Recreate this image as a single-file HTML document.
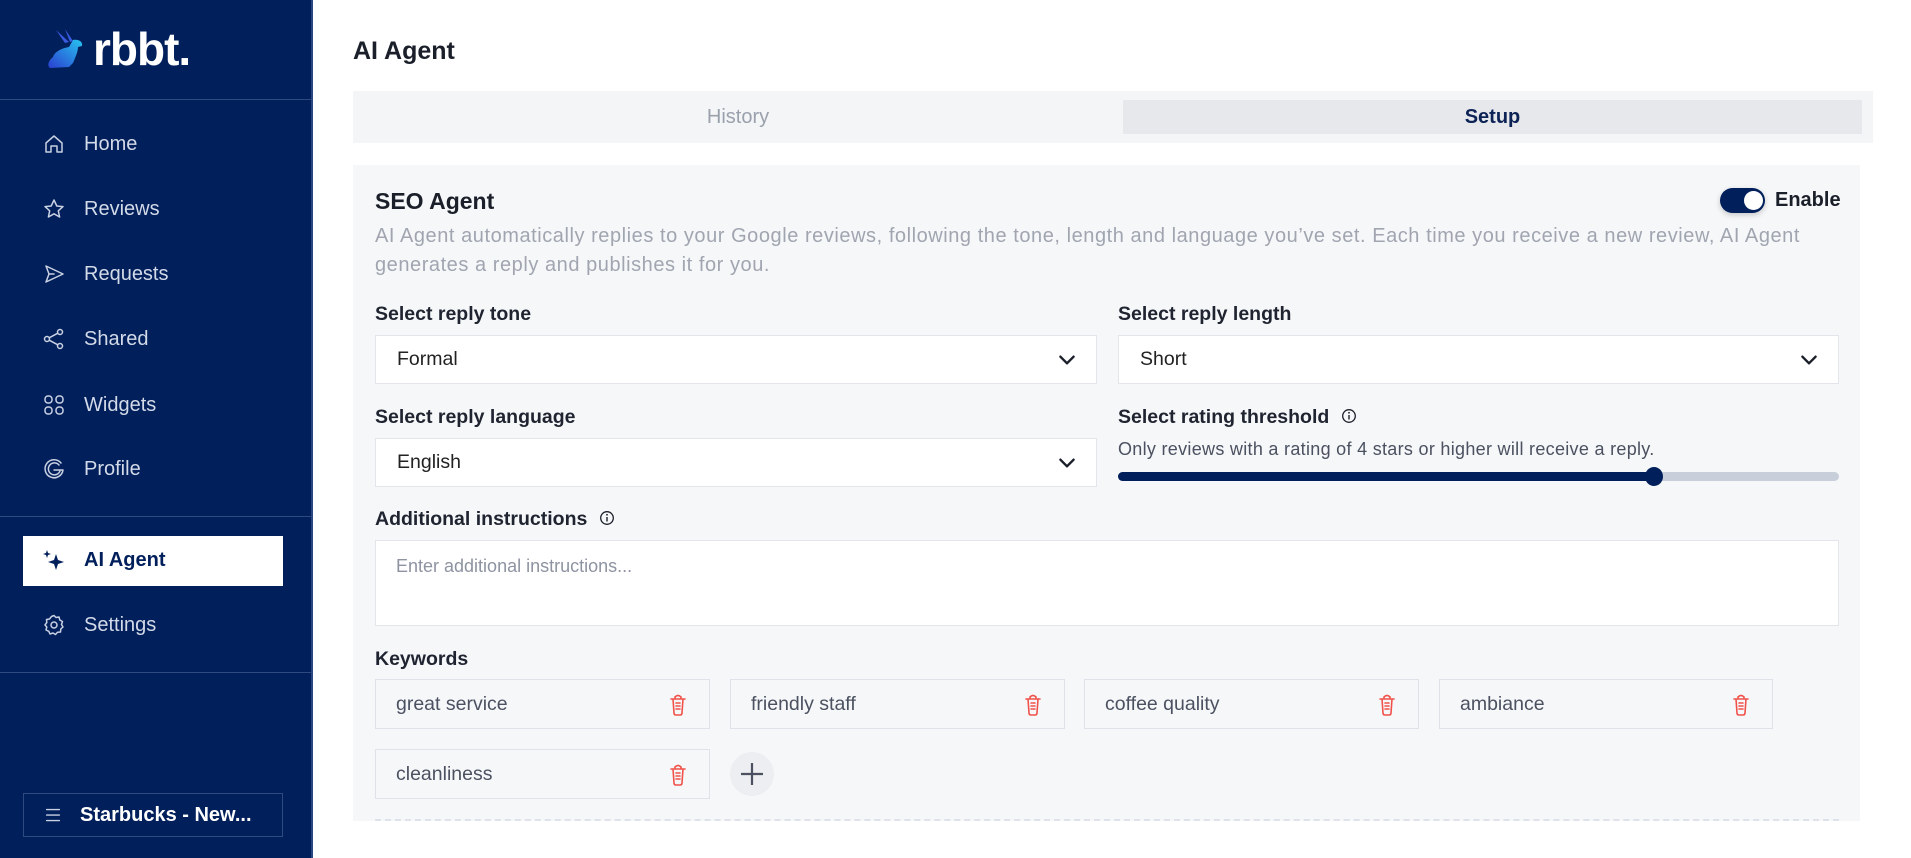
<!DOCTYPE html>
<html><head><meta charset="utf-8"><style>
*{box-sizing:border-box;margin:0;padding:0}
body{width:1911px;height:858px;overflow:hidden;background:#fff;font-family:"Liberation Sans",sans-serif;position:relative}
.sb{position:absolute;left:0;top:0;width:313px;height:858px;background:#011f5b;border-right:2px solid #2a4680}
.hr{position:absolute;left:0;width:311px;height:1px;background:#2f4a80}
.nav{position:absolute;left:42px;display:flex;align-items:center;color:#d3dae8;font-size:20px}
.nav svg{width:24px;height:24px;margin-right:18px;fill:none;stroke:#c9d1e2;stroke-width:1.5;stroke-linecap:round;stroke-linejoin:round}
.abs{position:absolute}
.lbl{position:absolute;font-size:19.5px;font-weight:bold;color:#1f2430}
.sel{position:absolute;height:49px;background:#fff;border:1px solid #e3e5ea;font-size:19.5px;color:#222;padding-left:21px;line-height:47px}
.sel svg{position:absolute;right:18px;top:13px}
.kw{position:absolute;height:50px;background:#f6f7f9;border:1px solid #dfe2e8;font-size:19.5px;color:#4b5160;padding-left:20px;line-height:48px}
.kw svg{position:absolute;right:21px;top:13px}
</style></head><body>
<div class="sb">
 <svg class="abs" style="left:45px;top:28px" width="50" height="44" viewBox="0 0 50 44">
  <defs><linearGradient id="g" x1="0" y1="1" x2="1" y2="0"><stop offset="0" stop-color="#2a3fd0"/><stop offset="1" stop-color="#27c3f0"/></linearGradient></defs>
  <path d="M11 2 L24 14 L20 15Z M20 1 L28 13 L25 14Z" fill="#3a5ae0"/>
  <path d="M28 12 C34 11 38 14 37 18 L33 19 C33 24 30 30 28 35 L24 39 L5 40 C2 38 3 33 8 29 C10 23 18 20 24 19 Z" fill="url(#g)"/>
 </svg>
 <div class="abs" style="left:93px;top:22px;color:#fff;font-size:46px;font-weight:bold;letter-spacing:-1px">rbbt.</div>
 <div class="hr" style="top:99px"></div>
 <div class="nav" style="top:132px"><svg viewBox="0 0 24 24"><path d="M4 11 L12 4 L20 11 V20 H15 V14 H9 V20 H4Z"/></svg>Home</div>
 <div class="nav" style="top:197px"><svg viewBox="0 0 24 24"><path d="M12 3 L14.8 9 L21 9.6 L16.3 13.8 L17.6 20 L12 16.8 L6.4 20 L7.7 13.8 L3 9.6 L9.2 9Z"/></svg>Reviews</div>
 <div class="nav" style="top:262px"><svg viewBox="0 0 24 24"><path d="M4 4 L21 12 L4 20 L7 12Z M7 12 H12"/></svg>Requests</div>
 <div class="nav" style="top:327px"><svg viewBox="0 0 24 24"><circle cx="18" cy="5" r="2.5"/><circle cx="18" cy="19" r="2.5"/><circle cx="5" cy="12" r="2.5"/><path d="M7.2 10.8 L15.8 6.2 M7.2 13.2 L15.8 17.8"/></svg>Shared</div>
 <div class="nav" style="top:393px"><svg viewBox="0 0 24 24"><rect x="3" y="3" width="7" height="7" rx="3"/><rect x="14" y="3" width="7" height="7" rx="3"/><rect x="3" y="14" width="7" height="7" rx="3"/><rect x="14" y="14" width="7" height="7" rx="3"/></svg>Widgets</div>
 <div class="nav" style="top:457px"><svg viewBox="0 0 24 24"><path d="M19 6 A9 9 0 1 0 21 13 H12 M17 8 A6 6 0 1 0 18 14"/></svg>Profile</div>
 <div class="hr" style="top:516px"></div>
 <div class="abs" style="left:23px;top:536px;width:260px;height:50px;background:#fff"></div>
 <div class="nav" style="top:548px;color:#011f5b;font-weight:bold"><svg viewBox="0 0 24 24" style="fill:#011f5b;stroke:none"><path d="M14 6 L16 12 L22 14 L16 16 L14 22 L12 16 L6 14 L12 12Z M5 2 L6 5 L9 6 L6 7 L5 10 L4 7 L1 6 L4 5Z"/></svg>AI Agent</div>
 <div class="nav" style="top:613px"><svg viewBox="0 0 24 24"><circle cx="12" cy="12" r="3"/><path d="M12 2.5 L14 4.5 L17 4 L17.8 7 L20.5 8.5 L19.5 11.5 L21 14 L18.8 16 L18.5 19 L15.5 19.3 L13.5 21.5 L11 20 L8 21 L6.8 18.3 L4 17 L4.8 14 L3 12 L4.8 9.5 L4.5 6.5 L7.5 6 L9.5 3.5Z"/></svg>Settings</div>
 <div class="hr" style="top:672px"></div>
 <div class="abs" style="left:23px;top:793px;width:260px;height:44px;border:1px solid #2f4a80"></div>
 <div class="nav" style="top:803px;left:42px;color:#fff;font-weight:bold"><svg viewBox="0 0 24 24" style="width:22px;margin-right:16px"><path d="M5 6H19M5 12H19M5 18H19"/></svg>Starbucks - New...</div>
</div>

<div class="abs" style="left:353px;top:37px;font-size:25px;font-weight:bold;color:#1b1f2a">AI Agent</div>
<div class="abs" style="left:353px;top:91px;width:1520px;height:52px;background:#f4f5f7"></div>
<div class="abs" style="left:1123px;top:100px;width:739px;height:34px;background:#e6e8ec"></div>
<div class="abs" style="left:353px;top:106px;width:770px;text-align:center;font-size:20px;color:#9aa1ad">History</div>
<div class="abs" style="left:1123px;top:106px;width:739px;text-align:center;font-size:20px;font-weight:bold;color:#0d2356">Setup</div>

<div class="abs" style="left:353px;top:165px;width:1507px;height:656px;background:#f6f7f9"></div>
<div class="abs" style="left:375px;top:188px;font-size:23px;font-weight:bold;color:#1b1f2a">SEO Agent</div>
<div class="abs" style="left:1720px;top:188px;width:45px;height:25px;border-radius:13px;background:#011f5b;box-shadow:0 2px 6px rgba(0,0,0,.2)"></div>
<div class="abs" style="left:1744px;top:191px;width:19px;height:19px;border-radius:50%;background:#fff"></div>
<div class="abs" style="left:1775px;top:189px;font-size:20px;font-weight:bold;color:#1b1f2a">Enable</div>
<div class="abs" style="left:375px;top:222px;width:1480px;font-size:20px;line-height:29px;color:#a0a5b0;white-space:nowrap;letter-spacing:0.55px">AI Agent automatically replies to your Google reviews, following the tone, length and language you’ve set. Each time you receive a new review, AI Agent<br>generates a reply and publishes it for you.</div>

<svg width="0" height="0" style="position:absolute"><defs>
<symbol id="chev" viewBox="0 0 20 20"><path d="M4 7 L10 13 L16 7" fill="none" stroke="#1b1f2a" stroke-width="2.2" stroke-linecap="round" stroke-linejoin="round"/></symbol>
<symbol id="trash" viewBox="0 0 20 24"><path d="M3 6 H17 M7 6 V4 Q10 1 13 4 V6 M5 6 L6 20 Q6 22 8 22 H12 Q14 22 14 20 L15 6 M8 10 H12 M8 13 H12 M8 16 H12" fill="none" stroke="#f0524a" stroke-width="1.6" stroke-linecap="round"/></symbol>
<symbol id="info" viewBox="0 0 16 16"><circle cx="8" cy="8" r="6.3" fill="none" stroke="#1b1f2a" stroke-width="1.3"/><path d="M8 7 V11.5" stroke="#1b1f2a" stroke-width="1.4"/><circle cx="8" cy="4.8" r=".9" fill="#1b1f2a"/></symbol>
</defs></svg>

<div class="lbl" style="left:375px;top:303px">Select reply tone</div>
<div class="sel" style="left:375px;top:335px;width:722px">Formal<svg width="22" height="22"><use href="#chev"/></svg></div>
<div class="lbl" style="left:1118px;top:303px">Select reply length</div>
<div class="sel" style="left:1118px;top:335px;width:721px">Short<svg width="22" height="22"><use href="#chev"/></svg></div>

<div class="lbl" style="left:375px;top:406px">Select reply language</div>
<div class="sel" style="left:375px;top:438px;width:722px">English<svg width="22" height="22"><use href="#chev"/></svg></div>
<div class="lbl" style="left:1118px;top:406px">Select rating threshold <svg width="16" height="16" style="vertical-align:-1px;margin-left:6px"><use href="#info"/></svg></div>
<div class="abs" style="left:1118px;top:439px;font-size:18px;color:#4b5160;letter-spacing:0.3px">Only reviews with a rating of 4 stars or higher will receive a reply.</div>
<div class="abs" style="left:1118px;top:472px;width:721px;height:9px;border-radius:5px;background:#c8ceda"></div>
<div class="abs" style="left:1118px;top:472px;width:538px;height:9px;border-radius:5px;background:#011f5b"></div>
<div class="abs" style="left:1645px;top:467px;width:18px;height:19px;border-radius:50%;background:#011f5b"></div>

<div class="lbl" style="left:375px;top:508px">Additional instructions <svg width="16" height="16" style="vertical-align:-1px;margin-left:6px"><use href="#info"/></svg></div>
<div class="abs" style="left:375px;top:540px;width:1464px;height:86px;background:#fff;border:1px solid #e3e5ea;padding:15px 20px;font-size:18px;color:#8d93a0">Enter additional instructions...</div>

<div class="lbl" style="left:375px;top:648px">Keywords</div>
<div class="kw" style="left:375px;top:679px;width:335px">great service<svg width="20" height="24"><use href="#trash"/></svg></div>
<div class="kw" style="left:730px;top:679px;width:335px">friendly staff<svg width="20" height="24"><use href="#trash"/></svg></div>
<div class="kw" style="left:1084px;top:679px;width:335px">coffee quality<svg width="20" height="24"><use href="#trash"/></svg></div>
<div class="kw" style="left:1439px;top:679px;width:334px">ambiance<svg width="20" height="24"><use href="#trash"/></svg></div>
<div class="kw" style="left:375px;top:749px;width:335px">cleanliness<svg width="20" height="24"><use href="#trash"/></svg></div>
<div class="abs" style="left:730px;top:752px;width:44px;height:44px;border-radius:50%;background:#eceef1"></div>
<svg class="abs" style="left:739px;top:761px" width="26" height="26"><path d="M13 2 V24 M2 13 H24" stroke="#4b5160" stroke-width="2.2"/></svg>
<div class="abs" style="left:375px;top:819px;width:1464px;border-top:2px dashed #dfe2ea"></div>
</body></html>
